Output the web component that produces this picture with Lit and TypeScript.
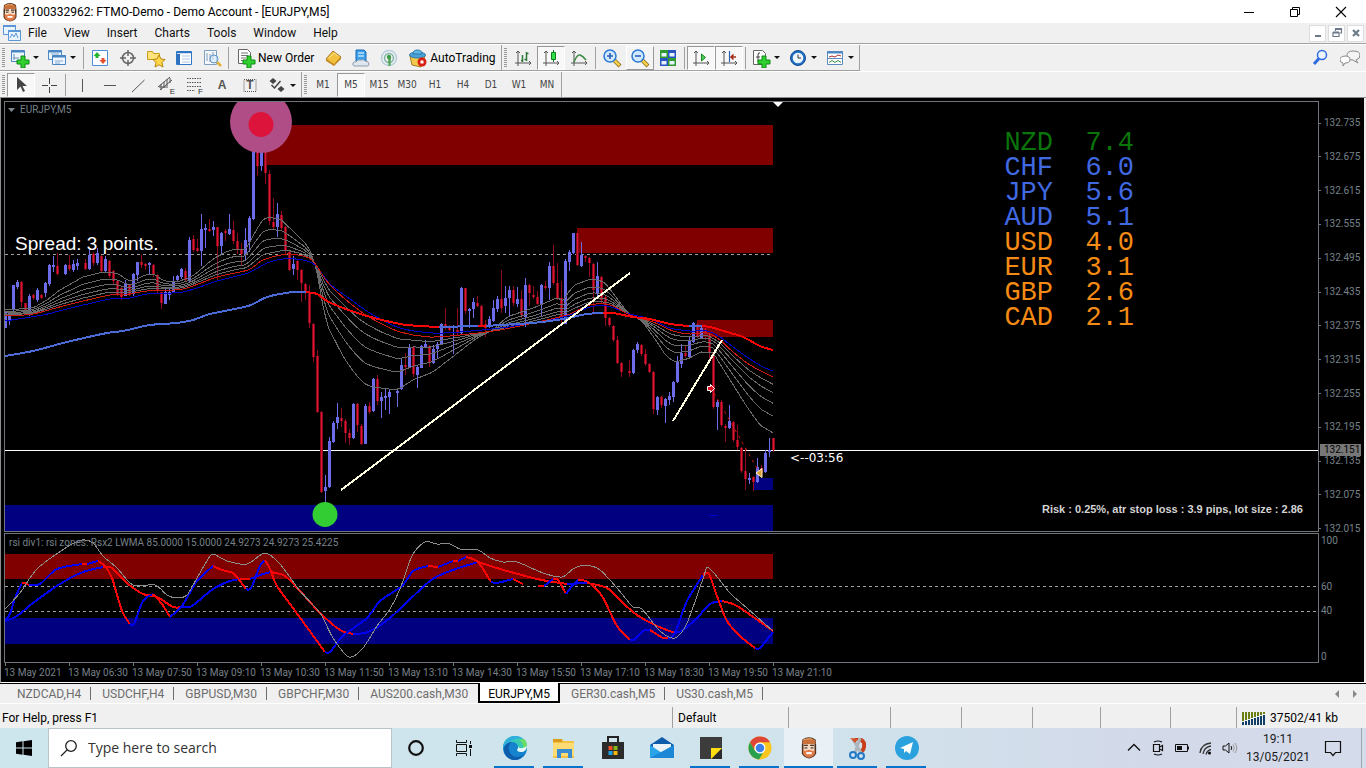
import { LitElement, html, svg, css, type TemplateResult, type SVGTemplateResult } from "lit";
import { customElement, property } from "lit/decorators.js";
import { classMap } from "lit/directives/class-map.js";

type Pt = [number, number];

/* ---------- Icons ---------- */

const axes = svg`<path d="M5 3v15M2 15h16M3 5l2-2 2 2M16 13l2 2-2 2" fill="none" stroke="#555"/>`;
const plus = svg`<path d="M11 8h4v4h4v4h-4v4h-4v-4h-4v-4h4z" fill="#2fd02f" stroke="#0a8a12"/>`;
const lens = (inner: SVGTemplateResult) => svg`<path d="M12 12l6 6" stroke="#8a6a14" stroke-width="4"/><path d="M12 12l5.500 5.500" stroke="#f5cf4b" stroke-width="2.500"/>
  <circle cx="8" cy="8" r="6" fill="#cfe9ff" stroke="#2c78d2" stroke-width="1.500"/>${inner}`;

const face = svg`<path d="M4 3q6-4 12 0l.5 5v7q-1 3.500-6.500 4.500-5.500-1-6.500-4.500V8z" fill="#4a3022"/>
  <path d="M4.500 3.500q6-3 11 0l.5 3.500H4z" fill="#c9713a"/><path d="M5 3.500q5-2 8-.5" stroke="#f0a468" fill="none"/>
  <path d="M5 7h10v7H5z" fill="#f7dcc6"/>
  <path d="M5.500 7.500h3.500v1.200H5.500zM11 7.500h3.500v1.200H11z" fill="#4a2d20"/><path d="M6 9.500h2.500v1.500H6zM11.500 9.500h2.500v1.500h-2.500z" fill="#7d675a"/>
  <path d="M4.500 11l1.500 2 4-1 4 1 1.500-2v4q-1 3-5.500 4-4.500-1-5.500-4z" fill="#e27a48"/>
  <path d="M7.500 14h5v1.800h-5z" fill="#fff"/>`;

const icons: Record<string, SVGTemplateResult> = {
  face,
  mdi: svg`<g fill="#eaf4ff" stroke="#5b97d6"><path d="M1.500 2.500h12v9h-12z"/><path d="M6.500 7.500h12v10h-12z"/></g><path d="M1 3h13M6 8h13" stroke="#5b97d6" stroke-width="2"/><path d="M8 15l2-4 2 3 2-4 2 5" fill="none" stroke="#5b97d6"/>`,
  newchart: svg`<path d="M1.500 2.500h13v11h-13z" fill="#eef6ff" stroke="#4b86c4"/><path d="M1 3.500h14" stroke="#4b86c4" stroke-width="2"/><path d="M4 6v6M3 10h6" stroke="#6b8fb5"/>${plus}`,
  profiles: svg`<g fill="#eef6ff" stroke="#4b86c4"><path d="M1.500 2.500h13v9h-13z"/><path d="M5.500 7.500h13v9h-13z"/></g><path d="M1 3.500h14M5 8.500h14" stroke="#4b86c4" stroke-width="2"/><path d="M4 6h8M8 13h8M8 15h5" stroke="#86a9cf"/>`,
  market: svg`<path d="M2.500 2.500h15v15h-15z" fill="#fff" stroke="#4b8fd8"/><path d="M7 4l3.500 4h-2v2h-3V8h-2z" fill="#25b52c"/><path d="M13 16l-3.500-4h2v-2h3v2h2z" fill="#e4502e"/>`,
  cross: svg`<circle cx="10" cy="10" r="5.500" fill="none" stroke="#666" stroke-width="1.500"/><path d="M10 2v6M10 12v6M2 10h6M12 10h6" stroke="#666" stroke-width="1.500"/>`,
  favs: svg`<path d="M1.500 3.500h5l1 2h6v6h-12z" fill="#ffe27a" stroke="#c99a1c"/><path d="M13 7l2 4 4 .5-3 3 1 4.500-4-2.200L9 19l1-4.500-3-3 4-.5z" fill="#ffd84a" stroke="#b8860b"/>`,
  terminal: svg`<path d="M2.500 3.500h15v13h-15z" fill="#fff" stroke="#2f76c8"/><path d="M2 4.500h16" stroke="#2f76c8" stroke-width="1.500"/><path d="M3 6h3v10H3z" fill="#2f6fbf"/><path d="M8 8h8M8 11h8M8 14h8" stroke="#a9c6e8"/>`,
  tester: svg`<path d="M2.500 2.500h12v14h-12z" fill="#f4f8fc" stroke="#7f9fbf"/><path d="M5 5v8M8 6v8M11 4v8" stroke="#7b98b6"/><circle cx="12" cy="11" r="4" fill="#d9ecfbaa" stroke="#5a95cf"/><path d="M15 14l4 4" stroke="#e0b23c" stroke-width="2.500"/>`,
  order: svg`<path d="M2.500 1.500h9l3 3v11h-12z" fill="#fff" stroke="#666"/><path d="M5 5h7M5 7.500h7M5 10h5M5 12.500h3" stroke="#777"/>${plus}`,
  book: svg`<path d="M3 11l7-8 8 6-7 8z" fill="#f3c13c" stroke="#a9761b"/><path d="M3 11v2l8 5v-2zM11 16v2l7-7V9z" fill="#c48a25"/><path d="M6 10l5-5 4 3" fill="none" stroke="#ffe69a"/>`,
  cloud: svg`<path d="M5 2h8l2 2v9H5z" fill="#3aa0ec" stroke="#1768b4"/><path d="M7 5h6M7 8h6" stroke="#fff"/><path d="M3 18q-2-1-1-3 1-2 3-1 1-3 5-2 3-1 4 1 4 0 4 3 0 2-2 2z" fill="#dfe6ee" stroke="#8d9cb0"/>`,
  signal: svg`<g fill="none"><circle cx="10" cy="10" r="7.500" stroke="#b5cfdd" stroke-width="1.500"/><circle cx="10" cy="10" r="4.500" stroke="#7fb3a8" stroke-width="1.500"/></g><path d="M9 9h3l-.5 9h-2z" fill="#54a65c"/><circle cx="10" cy="9" r="2.200" fill="#3f9c46"/>`,
  auto: svg`<path d="M2 8l2 9 9 2 4-11z" fill="#f3c94d" stroke="#a67a1c"/><ellipse cx="9.500" cy="7" rx="8" ry="3" fill="#4aa3d8" stroke="#2a78ac"/><path d="M5 6q0-4 4.500-4T14 6z" fill="#63b8e6" stroke="#2a78ac"/><circle cx="14" cy="14" r="4.500" fill="#d81f12"/><path d="M12.500 12.500h3v3h-3z" fill="#fff"/>`,
  bars: svg`${axes}<path d="M9.500 7v7M8 12.500h1.500M13.500 4v9M13.500 5.500h2M11.500 11.500h2" stroke="#2c7a35" stroke-width="1.500"/>`,
  candles: svg`${axes}<path d="M12.500 2v12" stroke="#0b7a1a"/><path d="M10.500 4.500h4v7h-4z" fill="#2ee04a" stroke="#0b7a1a"/>`,
  line: svg`${axes}<path d="M5 14q3-8 6-7t6 5" fill="none" stroke="#3e8b46" stroke-width="1.500"/>`,
  zoomin: lens(svg`<path d="M5 8h6M8 5v6" stroke="#2c5fb8" stroke-width="1.600"/>`),
  zoomout: lens(svg`<path d="M5 8h6" stroke="#2c5fb8" stroke-width="1.600"/>`),
  tile: svg`<path d="M2 2h8v8H2z" fill="#2f9a30"/><path d="M10 2h8v8h-8z" fill="#2a55c0"/><path d="M2 10h8v8H2z" fill="#2a55c0"/><path d="M10 10h8v8h-8z" fill="#2f9a30"/><path d="M3.500 5h5v3.500h-5zM11.500 5h5v3.500h-5zM3.500 13h5v3.500h-5zM11.500 13h5v3.500h-5z" fill="#e8f2ff"/>`,
  scroll: svg`${axes}<path d="M10.500 6l4 3.500-4 3.500z" fill="#4fd05a" stroke="#15851f"/>`,
  shift: svg`${axes}<path d="M10.500 3v11" stroke="#2c62b0" stroke-width="1.200"/><path d="M17 9h-4M14.500 6.500L12 9l2.500 2.500" fill="none" stroke="#a32916" stroke-width="1.500"/>`,
  indicators: svg`<path d="M2.500 2.500h9l3 3v11h-12z" fill="#fff" stroke="#666"/><path d="M9 5q-2-1-2 2v7M5 9h4" fill="none" stroke="#444"/>${plus}`,
  clock: svg`<circle cx="10" cy="10" r="7.500" fill="#1f6fc2"/><circle cx="10" cy="10" r="5.300" fill="#eef7ff"/><circle cx="10" cy="10" r="7.500" fill="none" stroke="#124d90"/><path d="M10 6.500V10h3" fill="none" stroke="#333"/>`,
  template: svg`<path d="M2.500 3.500h15v13h-15z" fill="#fff" stroke="#5c8bc0"/><path d="M2 4.500h16" stroke="#4b86c4" stroke-width="2"/><path d="M2 10.500h16" stroke="#5c8bc0"/><path d="M4 9l3-1 3 1 3-2 3 1" fill="none" stroke="#a33"/><path d="M4 14.500l3-2 3 2 3-2 3 2" fill="none" stroke="#3a8f44"/>`,
  find: svg`<circle cx="12" cy="7" r="4.500" fill="#eef5ff" stroke="#2f6be0" stroke-width="1.500"/><path d="M9 10.500L4 16" stroke="#2f6be0" stroke-width="3"/>`,
  chat: svg`<path d="M13 3q7 0 7 4t-4 5l2 3-5-3q-6 0-6-4.500T13 3z" fill="#f4f4f4" stroke="#888"/><path d="M5 8q5 0 5 3.500T5 15l-2 3v-3q-3-.5-3-3.500T5 8z" fill="#fff" stroke="#888"/>`,
  arrow: svg`<path d="M6 2v13l3.500-3.500 2.500 5.500 2-1-2.500-5H16z" fill="#444"/>`,
  hair: svg`<path d="M10.500 3v6M10.500 12v6M3 10.500h6M12 10.500h6" stroke="#444"/>`,
  vline: svg`<path d="M10.500 4v13" stroke="#555"/>`,
  hline: svg`<path d="M4 10.500h12" stroke="#555"/>`,
  trend: svg`<path d="M4 17L16.500 5" stroke="#555"/>`,
  channel: svg`<path d="M2 12L14 2M4 15L16 5M5 9v6M8 7v6M11 4v7M14 3v5M3 12h9" stroke="#555" fill="none"/>`,
  fibo: svg`<path d="M3 3.500h14M3 7.500h14M3 11.500h14M3 15.500h8" stroke="#555" stroke-dasharray="1.500 1"/>`,
  textbox: svg`<path d="M4 4.500h12v12H4z" fill="none" stroke="#555" stroke-dasharray="1 1"/>`,
  shapes: svg`<path d="M6 3l3.500 3L6 9 2.500 6zM14 11l3.500 3-3.500 3-3.500-3z" fill="#444"/><path d="M4.500 10l3 3 6-7" stroke="#444" stroke-width="1.500" fill="none"/>`,
  wmin: svg`<path d="M5 10.500h10" stroke="#000"/>`,
  wmax: svg`<path d="M5.500 7.500h7v7h-7zM7.500 7V5.500h7v7H13" fill="none" stroke="#000"/>`,
  wclose: svg`<path d="M5 5l10 10M15 5L5 15" stroke="#000" stroke-width="1.100"/>`,
  mmin: svg`<path d="M7 13h6" stroke="#6c7a89" stroke-width="2"/>`,
  mmax: svg`<path d="M6 9.500h6v4H6zM8.500 8V6h6v4H13" fill="none" stroke="#6c7a89" stroke-width="1.200"/><path d="M6 9.500h6M8 6h7" stroke="#6c7a89" stroke-width="2"/>`,
  mclose: svg`<path d="M7 7l6 6M13 7l-6 6" stroke="#6c7a89" stroke-width="2.200"/>`,
  meter: svg`${Array.from({ length: 8 }, (_, i) => svg`<path d=${`M${i * 3} ${4}h2v${9 - i}h-2z`} fill="#6b7f13"/><path d=${`M${i * 3} ${14 - i}h2v${3 + i}h-2z`} fill="#123d66"/>`)}`,
};

const icon = (name: string) => html`<svg class="icon" viewBox="0 0 20 20" width="20" height="20" aria-hidden="true">${icons[name]}</svg>`;

const apps: Record<string, SVGTemplateResult> = {
  edge: svg`<circle cx="12" cy="12" r="12" fill="#1683cf"/><path d="M0 12C0 4 6 0 12 0s12 4 12 10c0 4-3 6-6 6-3 0-4-1-4-2 1-1 1-2 1-3 0-3-3-5-6-5-5 0-8 3-9 6z" fill="#37c9b5"/><path d="M0 12C1 4 7 0 12 0c3 0 6 1 8 3-3-2-14 0-20 9z" fill="#2eaee0"/><path d="M24 10c0-3-1-5-3-7l-5 1q5 3 4 8 3 0 4-2z" fill="#6bdc66"/><path d="M1 12c1-4 5-6 8-6-4 2-5 10 1 14 4 2 8 1 11-2-2 4-6 6-9 6C5 24 0 18 1 12z" fill="#0f5eae"/><path d="M14 14c1-1 1-2 1-3q3 3 9-1-1 6-6 6-3 0-4-2z" fill="#eaf7fb"/>`,
  explorer: svg`<path d="M1 3h9l2 2h10v17H1z" fill="#f6c244"/><path d="M1 3h9v3H1z" fill="#d99b19"/><path d="M1 7h21v13H1z" fill="#ffdb73"/><path d="M5 22v-9h15v9h-4v-5H9v5z" fill="#3a8bd0"/>`,
  store: svg`<path d="M7 6V1h10v5" fill="none" stroke="#222" stroke-width="2"/><path d="M1 6h22v17H1z" fill="#2b2b2b"/><path d="M7.500 10h4v4h-4z" fill="#f0512b"/><path d="M12.500 10h4v4h-4z" fill="#80b918"/><path d="M7.500 15h4v4h-4z" fill="#1aa2ea"/><path d="M12.500 15h4v4h-4z" fill="#f9b80c"/>`,
  mail: svg`<path d="M0 9L12 1l12 8v13H0z" fill="#0f5cab"/><path d="M3 8h18v10H3z" fill="#e9f3f8"/><path d="M0 9l12 8L24 9v13H0z" fill="#2aa4e8"/><path d="M0 22L24 9v13z" fill="#1b87d6"/>`,
  notes: svg`<path d="M1 1h22v22H1z" fill="#3c3c3c"/><path d="M12 12h11L12 23z" fill="#ffdd12"/><path d="M12 23h11V12z" fill="#2b2b2b"/><path d="M12 12h11L12 23z" fill="#ffdd12"/>`,
  chrome: svg`<circle cx="12" cy="12" r="11.500" fill="#f8c61c"/><path d="M2 6.300A11.500 11.500 0 0 1 22 6.300H12a6 6 0 0 0-5.500 8z" fill="#de4638"/><path d="M2 6.300A11.500 11.500 0 0 0 11 23.500l5-8.500H7z" fill="#29a04e"/><circle cx="12" cy="12" r="5.500" fill="#fff"/><circle cx="12" cy="12" r="4.300" fill="#3d7fe8"/>`,
  mt4: svg`<g transform="translate(1 0) scale(1.100 1.150)">${face}</g>`,
  snip: svg`<path d="M7 2h9q5 3 4 9-1 6-5 6l-1-3q3-2 2-7z" fill="#c8401c"/><path d="M7 3l8 14M14 2l-5 15" stroke="#aeb6bd" stroke-width="3"/><path d="M4 2l8 1-3 4z" fill="#d85027"/><g fill="#cfe2f2" stroke="#2379c4" stroke-width="2"><circle cx="7" cy="19" r="3"/><circle cx="15" cy="20" r="3"/></g>`,
  telegram: svg`<circle cx="12" cy="12" r="12" fill="#2ba2de"/><path d="M5 12l13-6-3 12-4-3-2 2v-4z" fill="#fff"/>`,
};

/* ---------- Price data: [direction, high, open/close top, bottom, low] per bar ---------- */

const RAW = `u311 311 328 328;u312 313 320 325;u285 285 309 312;u280 282 287 289;d281 282 302 307;d303 303 311 312;u294 296 313 316;d294 295 298 300;u288 290 300 302;d294 295 298 299;u282 283 293 297;u264 265 284 286;u256 265 267 272;d253 266 274 275;-;u264 265 274 275;d255 265 269 271;u260 264 270 272;u259 263 266 270;-;d259 263 269 270;u250 255 269 270;d252 254 263 266;u248 253 263 265;d255 256 271 272;u256 259 271 272;d260 261 276 278;d270 271 281 284;d281 281 294 296;d287 288 297 300;u280 283 296 296;d284 285 295 296;u273 274 294 296;u262 262 275 281;d255 262 265 268;d263 264 266 270;u262 263 265 274;d264 265 275 277;d274 275 291 293;d292 292 303 309;u288 292 304 304;u288 292 295 300;u276 282 292 293;u275 276 280 282;u268 269 277 279;d268 271 280 281;u237 240 281 282;d235 239 250 252;d239 248 251 252;u214 229 251 266;u224 228 230 248;d219 229 231 232;u221 227 230 236;d227 227 246 281;u232 233 246 255;d229 231 233 241;u214 229 234 235;d221 230 241 244;d233 241 250 254;d243 249 254 266;u228 240 255 260;u216 218 242 252;u148 148 219 220;d151 151 166 176;u150 150 166 171;d152 152 173 184;d170 174 221 225;d198 222 227 229;u203 214 227 237;d211 215 228 230;d226 227 251 254;d251 252 270 271;u256 264 269 275;d259 261 270 280;d269 270 283 302;d283 284 291 300;d285 292 323 328;d323 324 357 362;d350 356 412 413;d411 412 492 493;u475 487 491 503;u437 441 487 488;u421 423 442 443;u403 417 423 429;d408 418 421 427;d419 421 433 443;d429 433 438 445;u403 404 438 439;d403 404 425 432;d424 426 444 445;u404 406 444 444;d402 406 412 414;u378 379 411 412;d375 379 401 405;u392 397 401 418;u388 396 398 410;u389 392 397 414;-;u389 391 393 407;u358 365 389 390;d353 365 367 375;u344 347 367 368;d346 347 374 377;u366 367 375 388;u345 346 368 368;u340 344 347 348;d345 346 362 367;u345 349 363 364;u342 344 349 358;u323 324 344 345;d308 324 326 330;d325 327 330 331;u325 326 328 354;d308 330 333 335;u287 288 333 334;d288 288 311 314;u308 309 311 328;u298 302 309 318;d296 303 306 307;d305 306 326 327;d320 324 328 337;u316 319 327 328;u300 308 321 322;u296 299 309 312;d270 299 308 313;u286 298 306 313;u286 290 298 317;d286 290 303 306;u287 299 304 307;d290 299 315 318;u278 285 317 327;d284 285 293 306;d286 295 297 299;d291 297 304 305;u284 285 305 316;d281 286 288 290;u262 266 288 300;d245 266 283 285;d263 283 298 300;d281 298 319 323;u259 261 324 324;u250 252 262 271;u233 233 253 254;d233 233 265 266;u242 255 266 267;d255 256 258 262;d257 258 263 277;d263 264 290 315;u262 276 293 298;d276 277 300 303;d295 297 318 326;d317 318 325 327;d325 326 340 342;d336 340 363 364;d362 363 372 377;-;d360 371 373 377;u349 350 373 374;u342 344 350 353;d344 345 354 356;d349 354 364 366;d363 364 372 373;d371 372 409 414;u396 397 410 415;d396 397 405 408;u398 399 406 423;u392 396 400 405;u381 382 397 402;u356 362 382 383;u344 353 364 368;d346 353 356 358;u336 341 357 358;u322 323 342 343;d323 324 336 338;u325 328 338 338;d327 328 334 340;d332 333 352 360;d352 353 407 409;u400 402 407 430;d400 402 425 427;d424 426 428 442;u405 421 428 429;d421 422 440 442;d425 440 447 450;d447 448 471 473;d448 471 479 490;u473 478 480 484;d476 477 482 491;u458 467 482 483;d465 468 473 474;u450 453 472 473;u438 450 452 457;d438 438 450 452`;

const BARS = RAW.split(";").map((s) => (s === "-" ? null : { up: s[0] === "u", v: s.slice(1).split(" ").map(Number) }));

/* ---------- Moving averages ---------- */

const MA_FAST: Pt[] = [[5, 310], [33, 308], [47, 300], [60, 290], [83, 277], [103, 272], [117, 273], [127, 280], [133, 281], [147, 274], [157, 275], [163, 281], [177, 282], [193, 276], [213, 259], [230, 250], [247, 249], [253, 235], [265, 217], [280, 219], [293, 231], [307, 245], [315, 261], [320, 291], [327, 325], [343, 356], [350, 367], [363, 383], [373, 387], [397, 390], [413, 380], [433, 372], [455, 355], [477, 338], [493, 330], [507, 317], [533, 308], [557, 298], [563, 300], [573, 286], [590, 279], [603, 281], [613, 293], [627, 312], [643, 322], [657, 342], [667, 357], [675, 362], [690, 358], [700, 352], [713, 353], [727, 375], [747, 407], [760, 425], [773, 433]];
const MA_RED: Pt[] = [[5, 316], [33, 314], [67, 305], [110, 295], [123, 295], [147, 291], [183, 289], [217, 277], [248, 270], [263, 260], [287, 254], [303, 256], [313, 261], [330, 285], [360, 311], [380, 323], [400, 332], [430, 337], [460, 335], [500, 330], [533, 323], [567, 315], [590, 305], [610, 305], [630, 315], [653, 322], [673, 331], [690, 334], [707, 333], [720, 340], [733, 352], [750, 365], [773, 377]];
const MA_BLUE: Pt[] = [[5, 321], [43, 315], [67, 309], [110, 299], [130, 298], [147, 294], [183, 292], [217, 281], [248, 273], [267, 263], [283, 259], [303, 260], [315, 265], [330, 284], [350, 299], [373, 315], [400, 328], [433, 333], [460, 332], [500, 328], [533, 323], [567, 316], [590, 307], [607, 306], [630, 314], [650, 319], [670, 328], [690, 331], [707, 331], [720, 337], [733, 347], [750, 359], [763, 367], [773, 371]];
const MA_SLOW: [string, Pt[]][] = [
  ["b", [[5, 356], [33, 351], [67, 342], [107, 333], [123, 331], [150, 325], [177, 323], [193, 320], [210, 314], [248, 306], [267, 297], [293, 292], [306, 292]]],
  ["r", [[306, 292], [317, 294], [327, 301], [343, 308], [367, 316], [400, 324], [420, 326], [439, 327]]],
  ["b", [[439, 327], [478, 326]]],
  ["r", [[478, 326], [486, 326]]],
  ["b", [[486, 326], [500, 325], [533, 323], [563, 319], [587, 314], [603, 313]]],
  ["r", [[603, 313], [613, 313], [633, 317], [650, 319], [670, 324], [689, 326]]],
  ["b", [[689, 326], [702, 326]]],
  ["r", [[702, 326], [710, 327], [727, 332], [743, 337], [760, 346], [773, 350]]],
];

/* ---------- Oscillator lines ---------- */

const OSC_THIN: Pt[] = [[5, 608], [20, 592], [37, 568], [67, 546], [82, 539], [93, 542], [103, 555], [117, 567], [133, 584], [155, 584], [167, 594], [177, 597], [187, 594], [197, 577], [207, 560], [213, 553], [227, 560], [247, 563], [265, 552], [280, 563], [300, 590], [320, 612], [333, 637], [349, 656], [363, 647], [377, 625], [390, 608], [400, 588], [412, 555], [425, 541], [437, 543], [450, 543], [460, 548], [478, 549], [490, 557], [503, 561], [517, 561], [543, 572], [562, 576], [573, 568], [585, 564], [600, 569], [617, 587], [633, 606], [642, 608], [660, 630], [675, 637], [687, 622], [703, 578], [709, 567], [730, 592], [747, 607], [773, 630]];
const OSC_FAST: [string, Pt[]][] = [
  ["b", [[5, 619], [10, 613], [15, 597], [22, 582]]], ["r", [[22, 582], [25, 582], [29, 584]]],
  ["b", [[29, 584], [40, 583], [57, 568], [82, 563]]], ["r", [[82, 563], [87, 563]]], ["b", [[87, 563], [98, 560]]],
  ["r", [[98, 560], [105, 565], [112, 577], [122, 610], [130, 623]]], ["b", [[130, 623], [134, 623], [143, 600], [153, 593]]],
  ["r", [[153, 593], [162, 603], [170, 616]]], ["b", [[170, 616], [182, 605], [197, 580], [213, 565]]],
  ["r", [[213, 565], [222, 569], [233, 572], [240, 580], [246, 588]]], ["b", [[246, 588], [251, 587], [260, 565], [265, 559]]],
  ["r", [[265, 559], [270, 568], [277, 585], [293, 607], [325, 651]]],
  ["b", [[325, 651], [330, 651], [343, 635], [367, 617], [380, 600], [402, 585], [413, 570], [428, 565]]],
  ["r", [[428, 565], [438, 566]]], ["b", [[438, 566], [453, 560]]], ["r", [[453, 560], [458, 560]]], ["b", [[458, 560], [466, 556]]],
  ["r", [[466, 556], [478, 561], [491, 581]]], ["b", [[491, 581], [497, 582], [513, 578]]], ["r", [[513, 578], [523, 583]]],
  ["r", [[538, 585], [544, 585]]], ["b", [[544, 585], [553, 578]]], ["r", [[553, 578], [558, 579], [566, 593]]],
  ["b", [[566, 593], [572, 585], [578, 579]]], ["r", [[578, 579], [588, 581], [602, 595], [617, 625], [630, 639]]],
  ["b", [[630, 639], [634, 639], [643, 630], [650, 629]]], ["r", [[650, 629], [663, 637], [668, 637]]],
  ["b", [[668, 637], [672, 636], [677, 627], [687, 600], [703, 574]]],
  ["r", [[703, 574], [709, 573], [717, 595], [727, 620], [740, 635], [755, 647]]], ["b", [[755, 647], [760, 647], [773, 631]]],
];
const OSC_SLOW: [string, Pt[]][] = [
  ["b", [[5, 620], [17, 615], [33, 602], [60, 583], [83, 571], [103, 566]]],
  ["r", [[103, 566], [112, 567], [127, 582], [143, 593], [157, 596], [173, 606], [182, 606]]],
  ["b", [[182, 606], [192, 605], [213, 588], [230, 580], [240, 578]]], ["r", [[240, 578], [250, 578]]],
  ["b", [[250, 578], [263, 573], [271, 571]]], ["r", [[271, 571], [285, 575], [300, 590], [320, 612], [340, 629], [353, 633]]],
  ["b", [[353, 633], [368, 631], [390, 617], [430, 580], [453, 569], [478, 561]]],
  ["r", [[478, 561], [500, 568], [533, 577], [547, 580], [567, 583]]], ["b", [[567, 583], [587, 582]]],
  ["r", [[587, 582], [607, 587], [623, 602], [637, 614], [657, 625], [675, 632]]],
  ["b", [[675, 632], [683, 629], [697, 617], [710, 603], [722, 600]]], ["r", [[722, 600], [737, 605], [773, 630]]],
];

/* Smooth curve through the points (Catmull-Rom converted to cubic segments). */
const curve = (p: Pt[]) => {
  let d = `M${p[0][0]} ${p[0][1]}`;
  for (let i = 0; i < p.length - 1; i++) {
    const a = p[i - 1] ?? p[i], b = p[i], c = p[i + 1], e = p[i + 2] ?? c;
    const k = 7;
    d += `C${b[0] + (c[0] - a[0]) / k} ${b[1] + (c[1] - a[1]) / k} ${c[0] - (e[0] - b[0]) / k} ${c[1] - (e[1] - b[1]) / k} ${c[0]} ${c[1]}`;
  }
  return d;
};

const valueAt = (p: Pt[], x: number) => {
  let i = 1;
  while (i < p.length - 1 && p[i][0] < x) i++;
  const [x0, y0] = p[i - 1], [x1, y1] = p[i];
  return y0 + ((y1 - y0) * (x - x0)) / (x1 - x0);
};

const blend = (f: number) => {
  const out: Pt[] = [];
  for (let x = 5; x <= 773; x += 6) out.push([x, valueAt(MA_RED, x) + f * (valueAt(MA_FAST, x) - valueAt(MA_RED, x))]);
  return curve(out);
};

@customElement("price-chart")
export class PriceChart extends LitElement {
  static styles = css`
    :host { display: flex; flex-direction: column; flex: 1; min-height: 0; background: #000; color: #77808a; padding: 3px 0 0 3px; overflow: hidden;
      font: 10px/12px Roboto, Tahoma, sans-serif; }
    .row { display: flex; min-height: 0; }
    .price { flex: 430; }
    .osc { flex: 130; margin-top: 1px; }
    .pane { flex: 1; position: relative; border: 1px solid #6f757b; overflow: hidden; }
    .scale { width: 45px; display: flex; flex-direction: column; justify-content: space-between; position: relative; }
    .price .scale { margin: 16px 0 -3px; }
    .osc .scale { padding: 2px 0 0 2px; box-sizing: border-box; display: block; }
    .scale span { display: flex; align-items: center; gap: 3px; }
    .price .scale span::before { content: ""; width: 2px; height: 1px; background: #6f757b; }
    .osc .scale span { position: absolute; }
    .lvl-100 { top: 2px; }
    .lvl-60 { top: 48px; }
    .lvl-40 { top: 72px; }
    .lvl-0 { top: 118px; }
    .now { position: absolute; left: 1px; top: 327px; width: 41px; box-sizing: border-box; padding-left: 4px; background: #777; color: #000; line-height: 12px; }
    svg { display: block; width: 100%; height: 100%; }
    .plot { position: absolute; inset: 0; }
    .tag { position: absolute; left: 15px; top: 2px; line-height: 12px; }
    .osc .tag { left: 4px; top: 3px; }
    .spread { position: absolute; left: 10px; top: 131px; font: 19px/22px "Liberation Sans", Arial, sans-serif; color: #fff; }
    .timer { position: absolute; left: 785px; top: 348px; font: 12px/16px "DejaVu Sans", Verdana, sans-serif; color: #fff; }
    .risk { position: absolute; right: 15px; bottom: 15px; font: bold 11px/14px "Liberation Sans", Arial, sans-serif; color: #d3d3d3; }
    .strength { position: absolute; right: 184px; top: 29px; border-collapse: collapse; font: 27px/25px "Liberation Mono", "Courier New", monospace; }
    .strength td, .strength th { padding: 0; font-weight: normal; text-align: left; height: 25px; }
    .strength td { padding-left: 2ch; }
    .green { color: #0a750a; }
    .blue { color: #4169e1; }
    .orange { color: #f58a14; }
    .times { display: flex; height: 19px; overflow: hidden; }
    .times span { flex: 0 0 64px; white-space: nowrap; }
    .times span::before { content: ""; display: block; width: 1px; height: 3px; margin: 0 0 1px 1px; background: #6f757b; }
    .lines path { shape-rendering: crispEdges; }
    .b { stroke: #0000f0; }
    .r { stroke: #fa0505; }
    .slow .b { stroke: #4a6bd8; }
  `;

  private pricePlot() {
    return html`<svg class="plot" aria-label="EURJPY five minute candles"><g transform="translate(-5 -102)">
      <g fill="#800000"><path d="M266 125h507v40H266z"/><path d="M577 228h196v25H577z"/><path d="M697 320h76v17h-76z"/></g>
      <g fill="#000080"><path d="M5 505h768v26H5z"/><path d="M753 478h20v12h-20z"/></g>
      <path d="M709 515.500h8" stroke="#0000d0"/>
      <path d="M5 254.500h768" stroke="#a0a0a0" stroke-dasharray="3 3"/>
      <line x1="5" x2="200%" y1="450.500" y2="450.500" stroke="#fff"/>
      <g shape-rendering="crispEdges">
        ${BARS.map((b, i) => {
          if (!b) return null;
          const x = 5 + i * 4, [h, t, e, l] = b.v;
          return svg`<path d=${`M${x} ${h}h1v${l - h}h-1z`} fill=${b.up ? "#6c6cea" : "#8f0a1c"}/><path d=${`M${x - 1} ${t}h3v${Math.max(1, e - t)}h-3z`} fill=${b.up ? "#6c6cea" : "#8c0a1e"}/>${b.up ? null : svg`<path d=${`M${x} ${t}h1v${Math.max(1, e - t)}h-1z`} fill="#e01430"/>`}`;
        })}
      </g>
      <g class="lines">
        <g fill="none" stroke="#6a6a6a">${[1, 0.7, 0.47, 0.28, 0.13].map((f) => svg`<path d=${blend(f)}/>`)}</g>
        <path d=${curve(MA_BLUE)} fill="none" stroke="#0000cd"/>
        <path d=${curve(MA_RED)} fill="none" stroke="#d01a10"/>
        <g class="slow" fill="none" stroke-width="2">${MA_SLOW.map(([c, p]) => svg`<path class=${c} d=${curve(p)}/>`)}</g>
        <path d="M341 490L630 273M673 421L722 340" stroke="#ffffe0" stroke-width="2"/>
      </g>
      <circle cx="261" cy="122" r="31" fill="#b04d86"/><circle cx="261" cy="124.500" r="12.500" fill="#dc143c"/>
      <circle cx="325" cy="514.500" r="12.500" fill="#32cd32"/>
      <path d="M714 393L758 470" stroke="#d01212" stroke-dasharray="3 4"/>
      <path d="M707.500 386.500h3v-2l4 4-4 4v-2h-3z" fill="#e01020" stroke="#fff"/>
      <path d="M762 468.500v9l-6-4.500z" fill="#d8a030" stroke="#fff0d0"/>
      <path d="M773 102h10l-5 5z" fill="#fff"/>
      <path d="M8 108h7l-3.500 4z" fill="#808890"/>
    </g></svg>`;
  }

  private oscPlot() {
    return html`<svg class="plot" aria-label="RSI zones"><g transform="translate(-5 -533)">
      <path d="M5 553h768v25H5z" fill="#800000"/><path d="M5 617h768v26H5z" fill="#000080"/>
      <g stroke="#a0a0a0" stroke-dasharray="3 3"><line x1="5" x2="200%" y1="585.500" y2="585.500"/><line x1="5" x2="200%" y1="610.500" y2="610.500"/></g>
      <g class="lines">
        <g fill="none" stroke-width="2">${[...OSC_SLOW, ...OSC_FAST].map(([c, p]) => svg`<path class=${c} d=${curve(p)}/>`)}</g>
        <path d=${curve(OSC_THIN)} fill="none" stroke="#8c8c8c"/>
      </g>
    </g></svg>`;
  }

  render() {
    const prices = Array.from({ length: 13 }, (_, i) => (132.735 - i * 0.06).toFixed(3));
    const times = ["2021", "06:30", "07:50", "09:10", "10:30", "11:50", "13:10", "14:30", "15:50", "17:10", "18:30", "19:50", "21:10"];
    const strength: [string, string, string][] = [["NZD", "7.4", "green"], ["CHF", "6.0", "blue"], ["JPY", "5.6", "blue"], ["AUD", "5.1", "blue"], ["USD", "4.0", "orange"], ["EUR", "3.1", "orange"], ["GBP", "2.6", "orange"], ["CAD", "2.1", "orange"]];
    return html`
      <div class="row price">
        <div class="pane">
          ${this.pricePlot()}
          <span class="tag">EURJPY,M5</span>
          <span class="spread">Spread: 3 points.</span>
          <span class="timer">&lt;--03:56</span>
          <table class="strength"><tbody>${strength.map(([n, v, c]) => html`<tr class=${c}><th scope="row">${n}</th><td>${v}</td></tr>`)}</tbody></table>
          <span class="risk">Risk : 0.25%, atr stop loss : 3.9 pips, lot size : 2.86</span>
        </div>
        <div class="scale">${prices.map((p) => html`<span>${p}</span>`)}<div class="now">132.151</div></div>
      </div>
      <div class="row osc">
        <div class="pane">${this.oscPlot()}<span class="tag">rsi div1: rsi zones: Rsx2 LWMA 85.0000 15.0000 24.9273 24.9273 25.4225</span></div>
        <div class="scale">${[100, 60, 40, 0].map((v) => html`<span class="lvl-${v}">${v}</span>`)}</div>
      </div>
      <div class="times">${times.map((t) => html`<span>13 May ${t}</span>`)}</div>`;
  }
}

@customElement("tool-button")
export class ToolButton extends LitElement {
  @property() icon = "";
  @property() label = "";
  @property() text = "";
  @property({ type: Boolean }) pressed = false;
  @property({ type: Boolean }) raised = false;
  @property({ type: Boolean }) menu = false;
  @property() letter = "";
  static styles = css`
    :host { display: block; flex: none; }
    button { position: relative; display: flex; align-items: center; justify-content: center; width: 28px; height: 24px; padding: 0; border: 1px solid transparent; background: none; color: #111; font: inherit; box-sizing: border-box; }
    .wide { width: auto; padding: 0 4px; gap: 2px; color: #000; }
    .pressed { background: #f8f8f8; border-color: #999 #fff #fff #999; }
    .raised { background: #f4f4f4; border-color: #fff #999 #999 #fff; }
    .menu { width: 37px; justify-content: flex-start; gap: 2px; padding-left: 2px; }
    .menu::after { content: ""; border: 3px solid transparent; border-top-color: #111; border-bottom: 0; margin-left: 1px; }
    .letter { position: absolute; right: 4px; bottom: 0; font: 8px/8px "Liberation Sans", sans-serif; color: #333; }
    .glyph { font: bold 12px/14px "Liberation Sans", sans-serif; color: #555; }
    .over { position: absolute; left: 0; right: 0; text-align: center; }
    .frame { font: 10px/12px "DejaVu Sans Condensed", sans-serif; color: #444; }
  `;
  render() {
    const glyph = this.icon === "" && this.letter !== "";
    return html`<button type="button" aria-label=${this.label || this.text} class=${classMap({ pressed: this.pressed, raised: this.raised, menu: this.menu, wide: this.text !== "" })}>
      ${this.icon ? icon(this.icon) : null}${this.text ? html`<span>${this.text}</span>` : null}
      ${glyph ? html`<span class=${this.letter.length > 1 ? "frame" : "glyph"}>${this.letter}</span>` : null}
      ${!glyph && this.letter ? html`<span class=${this.icon === "textbox" ? "glyph over" : "letter"}>${this.letter}</span>` : null}
    </button>`;
  }
}

@customElement("app-root")
export class AppRoot extends LitElement {
  static styles = css`
    :host { display: flex; flex-direction: column; height: 100vh; min-height: 480px; background: #f0f0f0; color: #111; overflow: hidden;
      font: 12px/16px Roboto, "Segoe UI", sans-serif; }
    button { font: inherit; color: inherit; border: 0; background: none; padding: 0; }
    .icon { display: block; flex: none; }
    .title { display: flex; align-items: center; height: 23px; flex: none; background: #fff; padding-right: 15px; gap: 3px; }
    .title h1 { font: inherit; margin: 0; flex: 1; color: #000; }
    .win { display: flex; gap: 26px; }
    .menu { display: flex; align-items: center; height: 20px; flex: none; border-bottom: 1px solid #a0a0a0; padding: 0 2px 0 2px; }
    .menu nav { display: flex; flex: 1; margin-left: -3px; }
    .menu nav button { padding: 0 8px 0 9px; }
    .mdi { display: flex; gap: 2px; }
    .mdi button { width: 17px; height: 17px; background: #fff; border: 1px solid #ddd; box-sizing: border-box; display: flex; align-items: center; justify-content: center; }
    .bar { display: flex; align-items: center; flex: none; height: 27px; border-top: 1px solid #fff; box-sizing: border-box; }
    .set { display: flex; align-items: center; height: 26px; box-sizing: border-box; border-right: 1px solid #a0a0a0; border-bottom: 1px solid #a0a0a0; }
    .bar.last { border-bottom: 1px solid #8c8c8c; }
    .bar.last .set { border-bottom: 0; padding-top: 1px; }
    .grip { width: 3px; height: 20px; margin: 0 2px; background: repeating-linear-gradient(#999 0 1px, transparent 1px 2px); }
    .sep { width: 1px; height: 22px; margin: 0 2px; background: #a0a0a0; }
    .push { flex: 1; }
    .aside { display: flex; gap: 10px; padding-right: 6px; }
    .frame { display: flex; flex: 1; min-height: 0; border: solid #b8b8b8; border-width: 0 2px 1px 1px; border-right-color: #eee; border-left-color: #8c8c8c; border-bottom-color: #fff; }
    .tabs { display: flex; align-items: stretch; flex: none; height: 21px; border-top: 1px solid #000; border-bottom: 1px solid #fff; box-sizing: border-box; padding-left: 6px; color: #6d6d6d; }
    .tabs button { position: relative; display: flex; align-items: center; padding: 1px 10px 0 11px; }
    .tabs button::after { content: ""; position: absolute; right: 0; top: 3px; bottom: 3px; width: 1px; background: #6d6d6d; }
    .tabs .on { background: #fff; color: #000; border: solid #000; border-width: 0 2px 2px 2px; padding: 3px 8px 0; margin-top: -1px; }
    .tabs .on::after, .tabs .before::after { display: none; }
    .arrows { display: flex; align-items: center; gap: 14px; margin-left: auto; padding-right: 9px; }
    .arrows i { border: 4px solid transparent; border-left: 0; border-right-color: #888; }
    .arrows i + i { border-left: 4px solid #888; border-right: 0; }
    .status { display: grid; grid-template-columns: 1fr 116px 102px 71px 71px 68px 70px 66px 130px; flex: none; height: 24px; padding-top: 3px; box-sizing: border-box; color: #000; }
    .status span { padding: 1px 5px 0; border-left: 1px solid #a0a0a0; display: flex; align-items: center; gap: 4px; }
    .status span:first-child { border: 0; padding-left: 2px; }
    .meter { display: block; }
    .task { display: flex; align-items: stretch; flex: none; height: 40px; background: linear-gradient(90deg, #cde6ee, #d0e3ec 60%, #d3d9e9 85%, #d4dbea); color: #1a1a1a; }
    .task button { width: 49px; display: flex; align-items: center; justify-content: center; position: relative; }
    .task .narrow { width: 48px; }
    .task .run::after { content: ""; position: absolute; left: 4px; right: 5px; bottom: 0; height: 2px; background: #0a74ca; }
    .task .active { background: #e9f1f7; }
    .task .active::after { left: 0; right: 0; }
    .apps { display: flex; align-items: stretch; padding-left: 2px; }
    .search { display: flex; align-items: center; width: 344px; box-sizing: border-box; background: #fff; border: 1px solid #b9c4c9; padding-left: 11px; gap: 8px; }
    .search input { flex: 1; min-width: 0; border: 0; outline: 0; background: none; font: 14px/20px "Open Sans", "Segoe UI", sans-serif; }
    .search input::placeholder { color: #333; opacity: 1; }
    .tray { display: flex; align-items: center; margin-left: auto; }
    .task .tray button { width: 24px; height: 40px; }
    .task .tray .clock { width: 72px; flex-direction: column; line-height: 18px; }
    .task .tray .note { width: 38px; margin-right: 9px; }
    .peek { width: 4px; align-self: stretch; border-left: 1px solid #9aa7b0; }
  `;

  private tools(list: [string, string][]): TemplateResult[] {
    return list.map(([i, l]) => html`<tool-button icon=${i} label=${l}></tool-button>`);
  }

  private app(name: string, label: string, cls = "") {
    return html`<button type="button" class=${cls} aria-label=${label}><svg viewBox="0 0 24 24" width="24" height="24">${apps[name]}</svg></button>`;
  }

  render() {
    const tabs = ["NZDCAD,H4", "USDCHF,H4", "GBPUSD,M30", "GBPCHF,M30", "AUS200.cash,M30", "EURJPY,M5", "GER30.cash,M5", "US30.cash,M5"];
    const sep = html`<i class="sep"></i>`;
    return html`
      <header class="title">${icon("face")}<h1>2100332962: FTMO-Demo - Demo Account - [EURJPY,M5]</h1>
        <div class="win">
          <button type="button" aria-label="Minimize">${icon("wmin")}</button>
          <button type="button" aria-label="Restore">${icon("wmax")}</button>
          <button type="button" aria-label="Close">${icon("wclose")}</button>
        </div>
      </header>
      <div class="menu">${icon("mdi")}
        <nav>${["File", "View", "Insert", "Charts", "Tools", "Window", "Help"].map((m) => html`<button type="button">${m}</button>`)}</nav>
        <div class="mdi">
          <button type="button" aria-label="Minimize chart">${icon("mmin")}</button>
          <button type="button" aria-label="Restore chart">${icon("mmax")}</button>
          <button type="button" aria-label="Close chart">${icon("mclose")}</button>
        </div>
      </div>
      <div class="bar">
        <div class="set"><i class="grip"></i>
          <tool-button icon="newchart" label="New chart" menu></tool-button>
          <tool-button icon="profiles" label="Profiles" menu></tool-button>${sep}
          ${this.tools([["market", "Market Watch"], ["cross", "Data Window"], ["favs", "Navigator"], ["terminal", "Terminal"], ["tester", "Strategy Tester"]])}${sep}
          <tool-button icon="order" text="New Order"></tool-button>
          ${this.tools([["book", "MetaEditor"], ["cloud", "Virtual hosting"], ["signal", "Signals"]])}
          <tool-button icon="auto" text="AutoTrading"></tool-button>
        </div>
        <div class="set"><i class="grip"></i>
          <tool-button icon="bars" label="Bar chart"></tool-button>
          <tool-button icon="candles" label="Candlesticks" pressed></tool-button>
          <tool-button icon="line" label="Line chart"></tool-button>${sep}
          <tool-button icon="zoomin" label="Zoom in"></tool-button>
          <tool-button icon="zoomout" label="Zoom out" raised></tool-button>
          <tool-button icon="tile" label="Tile windows"></tool-button>${sep}
          <tool-button icon="scroll" label="Auto scroll" pressed></tool-button>
          <tool-button icon="shift" label="Chart shift" pressed></tool-button>${sep}
          <tool-button icon="indicators" label="Indicators" menu></tool-button>
          <tool-button icon="clock" label="Periods" menu></tool-button>
          <tool-button icon="template" label="Templates" menu></tool-button>
        </div>
        <span class="push"></span>
        <div class="aside">
          <button type="button" aria-label="Search">${icon("find")}</button>
          <button type="button" aria-label="Chat">${icon("chat")}</button>
        </div>
      </div>
      <div class="bar last">
        <div class="set"><i class="grip"></i>
          <tool-button icon="arrow" label="Cursor" pressed></tool-button>
          <tool-button icon="hair" label="Crosshair"></tool-button>${sep}
          ${this.tools([["vline", "Vertical line"], ["hline", "Horizontal line"], ["trend", "Trendline"]])}
          <tool-button icon="channel" letter="E" label="Equidistant channel"></tool-button>
          <tool-button icon="fibo" letter="F" label="Fibonacci"></tool-button>
          <tool-button letter="A" label="Text"></tool-button>
          <tool-button icon="textbox" letter="T" label="Text label"></tool-button>
          <tool-button icon="shapes" label="Arrows" menu></tool-button>
        </div>
        <div class="set"><i class="grip"></i>
          ${["M1", "M5", "M15", "M30", "H1", "H4", "D1", "W1", "MN"].map((f) => html`<tool-button letter=${f} label=${f} ?pressed=${f === "M5"}></tool-button>`)}
        </div>
      </div>
      <main class="frame"><price-chart></price-chart></main>
      <div class="tabs">
        ${tabs.map((t, i) => html`<button type="button" class=${classMap({ on: i === 5, before: i === 4 })}>${t}</button>`)}
        <div class="arrows"><i></i><i></i></div>
      </div>
      <footer class="status">
        <span>For Help, press F1</span><span>Default</span><span></span><span></span><span></span><span></span><span></span><span></span>
        <span><svg class="meter" viewBox="0 3 24 14" width="24" height="14">${icons.meter}</svg>37502/41 kb</span>
      </footer>
      <div class="task">
        <button type="button" class="narrow" aria-label="Start"><svg viewBox="0 0 16 16" width="16" height="16"><path d="M0 2.200L6.500 1.300v6.200H0zM7.500 1.200L16 0v7.500H7.500zM0 8.500h6.500v6.200L0 13.800zM7.500 8.500H16V16l-8.500-1.200z" fill="#000"/></svg></button>
        <label class="search"><svg viewBox="0 0 18 18" width="18" height="18" aria-hidden="true"><circle cx="11" cy="7" r="5.300" fill="none" stroke="#222" stroke-width="1.300"/><path d="M7 11l-6 6" stroke="#222" stroke-width="1.300"/></svg>
          <input type="text" placeholder="Type here to search" aria-label="Search" /></label>
        <button type="button" class="narrow" aria-label="Cortana"><svg viewBox="0 0 18 18" width="18" height="18"><circle cx="9" cy="9" r="6.800" fill="none" stroke="#111" stroke-width="2.200"/></svg></button>
        <button type="button" class="narrow" aria-label="Task view"><svg viewBox="0 0 18 18" width="18" height="18"><path d="M1.500 5.500h10v7h-10zM1.500 1v2.500h10V1M1.500 17v-2.500h10V17M15.500 2v3M15.500 10v7" fill="none" stroke="#111"/><path d="M14 6h3v3h-3z" fill="#111"/></svg></button>
        <div class="apps">
          ${this.app("edge", "Edge", "run")}${this.app("explorer", "File Explorer", "run")}${this.app("store", "Store")}${this.app("mail", "Mail")}
          ${this.app("notes", "Sticky Notes", "run")}${this.app("chrome", "Chrome", "run")}${this.app("mt4", "Trading terminal", "run active")}${this.app("snip", "Snipping Tool", "run")}${this.app("telegram", "Telegram", "run")}
        </div>
        <div class="tray">
          <button type="button" aria-label="Hidden icons"><svg viewBox="0 0 16 16" width="16" height="16"><path d="M2 10.500l6-6 6 6" fill="none" stroke="#111" stroke-width="1.300"/></svg></button>
          <button type="button" aria-label="Meet now"><svg viewBox="0 0 16 16" width="16" height="16"><path d="M3.500 4.500h6v7h-6zM9.500 7l3-1.500v5l-3-1.500M4 2q4-2 8 0M4 14q4 2 8 0" fill="none" stroke="#111" stroke-width="1.200"/></svg></button>
          <button type="button" aria-label="Battery"><svg viewBox="0 0 16 16" width="16" height="16"><path d="M1.500 4.500h12v7h-12zM14.500 6.500v3" fill="none" stroke="#111"/><path d="M3 6h5v4H3z" fill="#111"/></svg></button>
          <button type="button" aria-label="Network"><svg viewBox="0 0 16 16" width="16" height="16"><path d="M2 13Q3 4 13 3M5 14q1-7 8-8M8 14.500q1-4 5-5" fill="none" stroke="#333" stroke-width="1.300"/><circle cx="11.500" cy="13" r="1.500"/></svg></button>
          <button type="button" aria-label="Volume"><svg viewBox="0 0 16 16" width="16" height="16"><path d="M1 6h2.500L7 3v10L3.500 10H1z" fill="none" stroke="#111"/><path d="M9 6q1.500 2 0 4" fill="none" stroke="#111"/><path d="M11 4.500q2.500 3.500 0 7M13 3q3.500 5 0 10" fill="none" stroke="#999"/></svg></button>
          <button type="button" class="clock"><span>19:11</span><span>13/05/2021</span></button>
          <button type="button" class="note" aria-label="Notifications"><svg viewBox="0 0 18 18" width="18" height="18"><path d="M1.500 2.500h15v11h-5l-2.500 3-2.500-3h-5z" fill="none" stroke="#111" stroke-width="1.200"/></svg></button>
          <i class="peek"></i>
        </div>
      </div>`;
  }
}
